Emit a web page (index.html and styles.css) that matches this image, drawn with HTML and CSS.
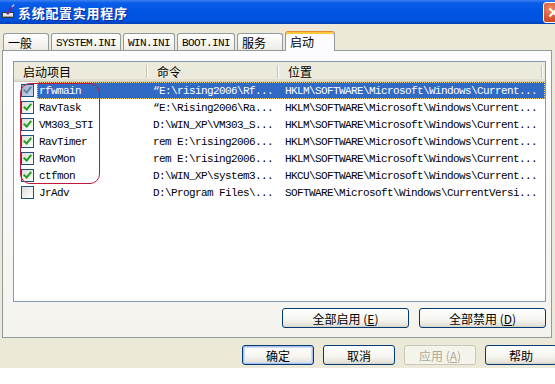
FILE: index.html
```html
<!DOCTYPE html>
<html lang="zh-CN">
<head>
    <meta charset="UTF-8">
    <title>系统配置实用程序</title>
    <link rel="stylesheet" href="styles.css">
</head>
<body>
    <div class="window">
        <div class="titlebar">
            <svg class="app-icon" width="16" height="16" viewBox="0 0 16 16">
                <rect x="1.5" y="8.5" width="11" height="5" fill="#e4e4e4" stroke="#3a3a3a"/>
                <rect x="2.5" y="12" width="9" height="1" fill="#9a9a9a"/>
                <path d="M6 10 L12 2" stroke="#5b2f9e" stroke-width="2.6"/>
                <path d="M11 3 L13 0.5" stroke="#c8b8f0" stroke-width="1.5"/>
            </svg>
            <span class="title">系统配置实用程序</span>
            <span class="close-btn">
                <svg width="19" height="19" viewBox="0 0 19 19">
                    <path d="M5.5 5.5 L13.5 13.5 M13.5 5.5 L5.5 13.5" stroke="#fff" stroke-width="2.2"/>
                </svg>
            </span>
        </div>

        <div class="client">
            <div class="tabs">
                <div class="tab">一般</div>
                <div class="tab mono">SYSTEM.INI</div>
                <div class="tab mono">WIN.INI</div>
                <div class="tab mono">BOOT.INI</div>
                <div class="tab">服务</div>
                <div class="tab tab-active">启动</div>
            </div>

            <div class="panel">
                <div class="listview">
                    <div class="lv-head">
                        <div class="lv-col h-name">启动项目</div>
                        <div class="lv-col h-cmd">命令</div>
                        <div class="lv-col h-loc">位置</div>
                    </div>

                    <div class="row">
                        <span class="cb cb-hot checked"></span>
                        <div class="cells selected mono">
                            <span class="c-name">rfwmain</span>
                            <span class="c-cmd">“E:\rising2006\Rf...</span>
                            <span class="c-loc">HKLM\SOFTWARE\Microsoft\Windows\Current...</span>
                        </div>
                    </div>
                    <div class="row">
                        <span class="cb checked"></span>
                        <div class="cells mono">
                            <span class="c-name">RavTask</span>
                            <span class="c-cmd">“E:\Rising2006\Ra...</span>
                            <span class="c-loc">HKLM\SOFTWARE\Microsoft\Windows\Current...</span>
                        </div>
                    </div>
                    <div class="row">
                        <span class="cb checked"></span>
                        <div class="cells mono">
                            <span class="c-name">VM303_STI</span>
                            <span class="c-cmd">D:\WIN_XP\VM303_S...</span>
                            <span class="c-loc">HKLM\SOFTWARE\Microsoft\Windows\Current...</span>
                        </div>
                    </div>
                    <div class="row">
                        <span class="cb checked"></span>
                        <div class="cells mono">
                            <span class="c-name">RavTimer</span>
                            <span class="c-cmd">rem E:\rising2006...</span>
                            <span class="c-loc">HKLM\SOFTWARE\Microsoft\Windows\Current...</span>
                        </div>
                    </div>
                    <div class="row">
                        <span class="cb checked"></span>
                        <div class="cells mono">
                            <span class="c-name">RavMon</span>
                            <span class="c-cmd">rem E:\rising2006...</span>
                            <span class="c-loc">HKLM\SOFTWARE\Microsoft\Windows\Current...</span>
                        </div>
                    </div>
                    <div class="row">
                        <span class="cb checked"></span>
                        <div class="cells mono">
                            <span class="c-name">ctfmon</span>
                            <span class="c-cmd">D:\WIN_XP\system3...</span>
                            <span class="c-loc">HKCU\SOFTWARE\Microsoft\Windows\Current...</span>
                        </div>
                    </div>
                    <div class="row">
                        <span class="cb"></span>
                        <div class="cells mono">
                            <span class="c-name">JrAdv</span>
                            <span class="c-cmd">D:\Program Files\...</span>
                            <span class="c-loc">SOFTWARE\Microsoft\Windows\CurrentVersi...</span>
                        </div>
                    </div>

                    <!-- red circle drawn round the checked items -->
                    <div class="marker"></div>
                </div>

                <div class="panel-actions">
                    <button class="btn btn-wide">全部启用 (<u>E</u>)</button>
                    <button class="btn btn-wide">全部禁用 (<u>D</u>)</button>
                </div>
            </div>

            <div class="dialog-actions">
                <button class="btn btn-default">确定</button>
                <button class="btn">取消</button>
                <button class="btn" disabled>应用 (<u>A</u>)</button>
                <button class="btn">帮助</button>
            </div>
        </div>
    </div>
</body>
</html>
```

FILE: styles.css
```css
body {
    margin: 0;
    width: 555px;
    height: 384px;
    overflow: hidden;
    background: #fff;
    font-family: "Noto Sans CJK SC", "Liberation Sans", sans-serif;
    font-size: 12px;
    color: #000;
}

.mono {
    font-family: "Liberation Mono", "Noto Sans CJK SC", monospace;
    font-size: 11px;
    letter-spacing: -0.6px;
}

.window {
    width: 568px;
    height: 368px;
    background: #ece9d8;
    display: flex;
    flex-direction: column;
}

/* title bar */
.titlebar {
    height: 24px;
    display: flex;
    align-items: center;
    padding: 0 4px 0 1px;
    color: #fff;
    background: linear-gradient(to bottom, #3c80f0 0%, #0a5ee8 12%, #0055e5 45%, #0052e0 85%, #003fb6 100%);
}

.app-icon {
    margin-right: 1px;
    flex: none;
}

.title {
    flex: 1;
    font-weight: bold;
    font-size: 13px;
    letter-spacing: 0.7px;
    text-shadow: 1px 1px #0a2a9a;
}

.close-btn {
    width: 21px;
    height: 21px;
    box-sizing: border-box;
    border: 1px solid #fff;
    border-radius: 3px;
    background: radial-gradient(circle at 35% 30%, #f08a64, #d6502a 60%, #b83c1c);
    display: flex;
    align-items: center;
    justify-content: center;
}

/* client area */
.client {
    flex: 1;
    padding: 7px 11px 3px 2px;
    display: flex;
    flex-direction: column;
}

.tabs {
    height: 19px;
    display: flex;
    align-items: flex-end;
    gap: 2px;
    padding-left: 1px;
    position: relative;
    z-index: 1;
}

.tab {
    height: 17px;
    min-width: 46px;
    box-sizing: border-box;
    padding: 1px 4px 0;
    line-height: 15px;
    border: 1px solid #919b9c;
    border-bottom: 0;
    border-radius: 3px 3px 0 0;
    background: linear-gradient(#fff, #f3f2ee 70%, #ecebe6);
}

.tab.mono {
    line-height: 16px;
}

.tab-active {
    height: 20px;
    min-width: 50px;
    margin-bottom: -1px;
    padding-top: 2px;
    background: #fcfcfe;
    border-top-color: #e68b2c;
    box-shadow: inset 0 2px #ffc83c;
}

.panel {
    width: 550px;
    height: 288px;
    box-sizing: border-box;
    border: 1px solid #919b9c;
    background: linear-gradient(#fcfcfe, #f4f3ee);
    padding: 10px 5px 9px 10px;
    display: flex;
    flex-direction: column;
}

/* list view */
.listview {
    flex: 1;
    border: 1px solid #7f9db9;
    background: #fff;
    position: relative;
}

.lv-head {
    height: 19px;
    display: flex;
    background: #ebeadb;
    border-bottom: 1px solid #d0ccbb;
    box-shadow: inset 0 -2px #e2decd;
}

.lv-col {
    position: relative;
    box-sizing: border-box;
    line-height: 19px;
}

.lv-col::after {
    content: "";
    position: absolute;
    right: 0;
    top: 3px;
    bottom: 3px;
    width: 1px;
    background: #c7c5b2;
    box-shadow: 1px 0 #fff;
}

.h-name {
    width: 133px;
    padding-left: 9px;
}

.h-cmd {
    width: 131px;
    padding-left: 10px;
}

.h-loc {
    width: 264px;
    padding-left: 10px;
}

.row {
    height: 17px;
    display: flex;
    align-items: center;
}

.cb {
    width: 13px;
    height: 13px;
    box-sizing: border-box;
    margin: 0 3px 0 7px;
    border: 1px solid #1c5180;
    background: linear-gradient(135deg, #dcdcd7, #fff);
    position: relative;
}

.cb.checked::after {
    content: "";
    position: absolute;
    left: 3px;
    top: 0px;
    width: 3px;
    height: 6px;
    border-right: 2px solid #21a121;
    border-bottom: 2px solid #21a121;
    transform: rotate(40deg);
}

.cb-hot {
    background: linear-gradient(135deg, #9fb2d4, #c9d6ee);
}

.cb-hot.checked::after {
    border-color: #5e8c9c;
}

.cells {
    flex: 1;
    height: 100%;
    display: flex;
    align-items: center;
    white-space: nowrap;
}

.cells.selected {
    background: #316ac5;
    color: #fff;
    outline: 1px dotted #e8d27a;
    outline-offset: -1px;
}

.c-name {
    width: 110px;
    padding-left: 2px;
    box-sizing: border-box;
}

.c-cmd {
    width: 131px;
    padding-left: 6px;
    box-sizing: border-box;
}

.c-loc {
    padding-left: 7px;
}

.marker {
    position: absolute;
    left: 6px;
    top: 21px;
    width: 80px;
    height: 101px;
    box-sizing: border-box;
    border: 1px solid #c0183a;
    border-radius: 10px;
}

/* buttons */
.panel-actions {
    margin-top: 6px;
    display: flex;
    justify-content: flex-end;
    gap: 10px;
}

.dialog-actions {
    margin-top: 7px;
    display: flex;
    justify-content: flex-end;
    gap: 9px;
}

.btn {
    width: 72px;
    height: 20px;
    padding: 0;
    font: inherit;
    color: #000;
    border: 1px solid #003c74;
    border-radius: 3px;
    background: linear-gradient(#fff, #f5f4ef 60%, #e6e3da 90%, #d6d0c5);
    line-height: 17px;
}

.btn-wide {
    width: 127px;
}

.btn-default {
    box-shadow: inset 0 0 0 1px #a9c0ec, inset 0 0 0 2px #cedcf5;
}

.btn:disabled {
    color: #aca899;
    border-color: #c9c7ba;
    background: #f5f4ea;
}

.btn u {
    text-underline-offset: 1px;
}
```
